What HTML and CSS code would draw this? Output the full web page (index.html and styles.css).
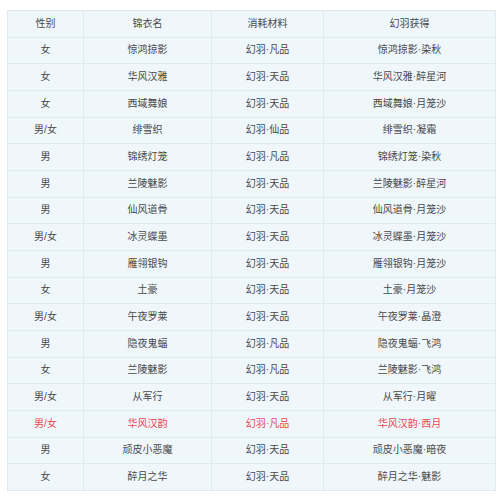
FILE: index.html
```html
<!DOCTYPE html>
<html>
<head>
<meta charset="utf-8">
<link rel="stylesheet" href="styles.css">
</head>
<body>
<table class="tbl">
<colgroup><col class="c1"><col class="c2"><col class="c3"><col class="c4"></colgroup>
<tr><td>性别</td><td>锦衣名</td><td>消耗材料</td><td>幻羽获得</td></tr>
<tr><td>女</td><td>惊鸿掠影</td><td>幻羽·凡品</td><td>惊鸿掠影·染秋</td></tr>
<tr><td>女</td><td>华风汉雅</td><td>幻羽·天品</td><td>华风汉雅·醉星河</td></tr>
<tr><td>女</td><td>西域舞娘</td><td>幻羽·天品</td><td>西域舞娘·月笼沙</td></tr>
<tr><td>男/女</td><td>绯雪织</td><td>幻羽·仙品</td><td>绯雪织·凝霜</td></tr>
<tr><td>男</td><td>锦绣灯笼</td><td>幻羽·凡品</td><td>锦绣灯笼·染秋</td></tr>
<tr><td>男</td><td>兰陵魅影</td><td>幻羽·天品</td><td>兰陵魅影·醉星河</td></tr>
<tr><td>男</td><td>仙风道骨</td><td>幻羽·天品</td><td>仙风道骨·月笼沙</td></tr>
<tr><td>男/女</td><td>冰灵蝶墨</td><td>幻羽·天品</td><td>冰灵蝶墨·月笼沙</td></tr>
<tr><td>男</td><td>雁翎银钩</td><td>幻羽·天品</td><td>雁翎银钩·月笼沙</td></tr>
<tr><td>女</td><td>土豪</td><td>幻羽·天品</td><td>土豪·月笼沙</td></tr>
<tr><td>男/女</td><td>午夜罗莱</td><td>幻羽·天品</td><td>午夜罗莱·晶澄</td></tr>
<tr><td>男</td><td>隐夜鬼蝠</td><td>幻羽·凡品</td><td>隐夜鬼蝠·飞鸿</td></tr>
<tr><td>女</td><td>兰陵魅影</td><td>幻羽·凡品</td><td>兰陵魅影·飞鸿</td></tr>
<tr><td>男/女</td><td>从军行</td><td>幻羽·天品</td><td>从军行·月曜</td></tr>
<tr class="red"><td>男/女</td><td>华风汉韵</td><td>幻羽·凡品</td><td>华风汉韵·西月</td></tr>
<tr><td>男</td><td>顽皮小恶魔</td><td>幻羽·天品</td><td>顽皮小恶魔·暗夜</td></tr>
<tr><td>女</td><td>醉月之华</td><td>幻羽·天品</td><td>醉月之华·魅影</td></tr>
</table>
</body>
</html>
```
FILE: styles.css
```css
html, body { margin: 0; padding: 0; background: #fff; }
body { padding: 10px 5px 0 7px; }
.tbl {
  border-collapse: collapse;
  table-layout: fixed;
  width: 488px;
  background: #eff7fb;
  font-family: "Liberation Sans", "Noto Sans CJK SC", sans-serif;
  font-size: 10px;
  color: #484848;
}
.c1 { width: 76px; }
.c2 { width: 128px; }
.c3 { width: 112px; }
.c4 { width: 172px; }
.tbl tr { height: 26.67px; }
.tbl td {
  border: 1px solid #dfe9ef;
  text-align: center;
  padding: 0;
  line-height: 14px;
}
.tbl tr.red td { color: #e8474f; }
```
